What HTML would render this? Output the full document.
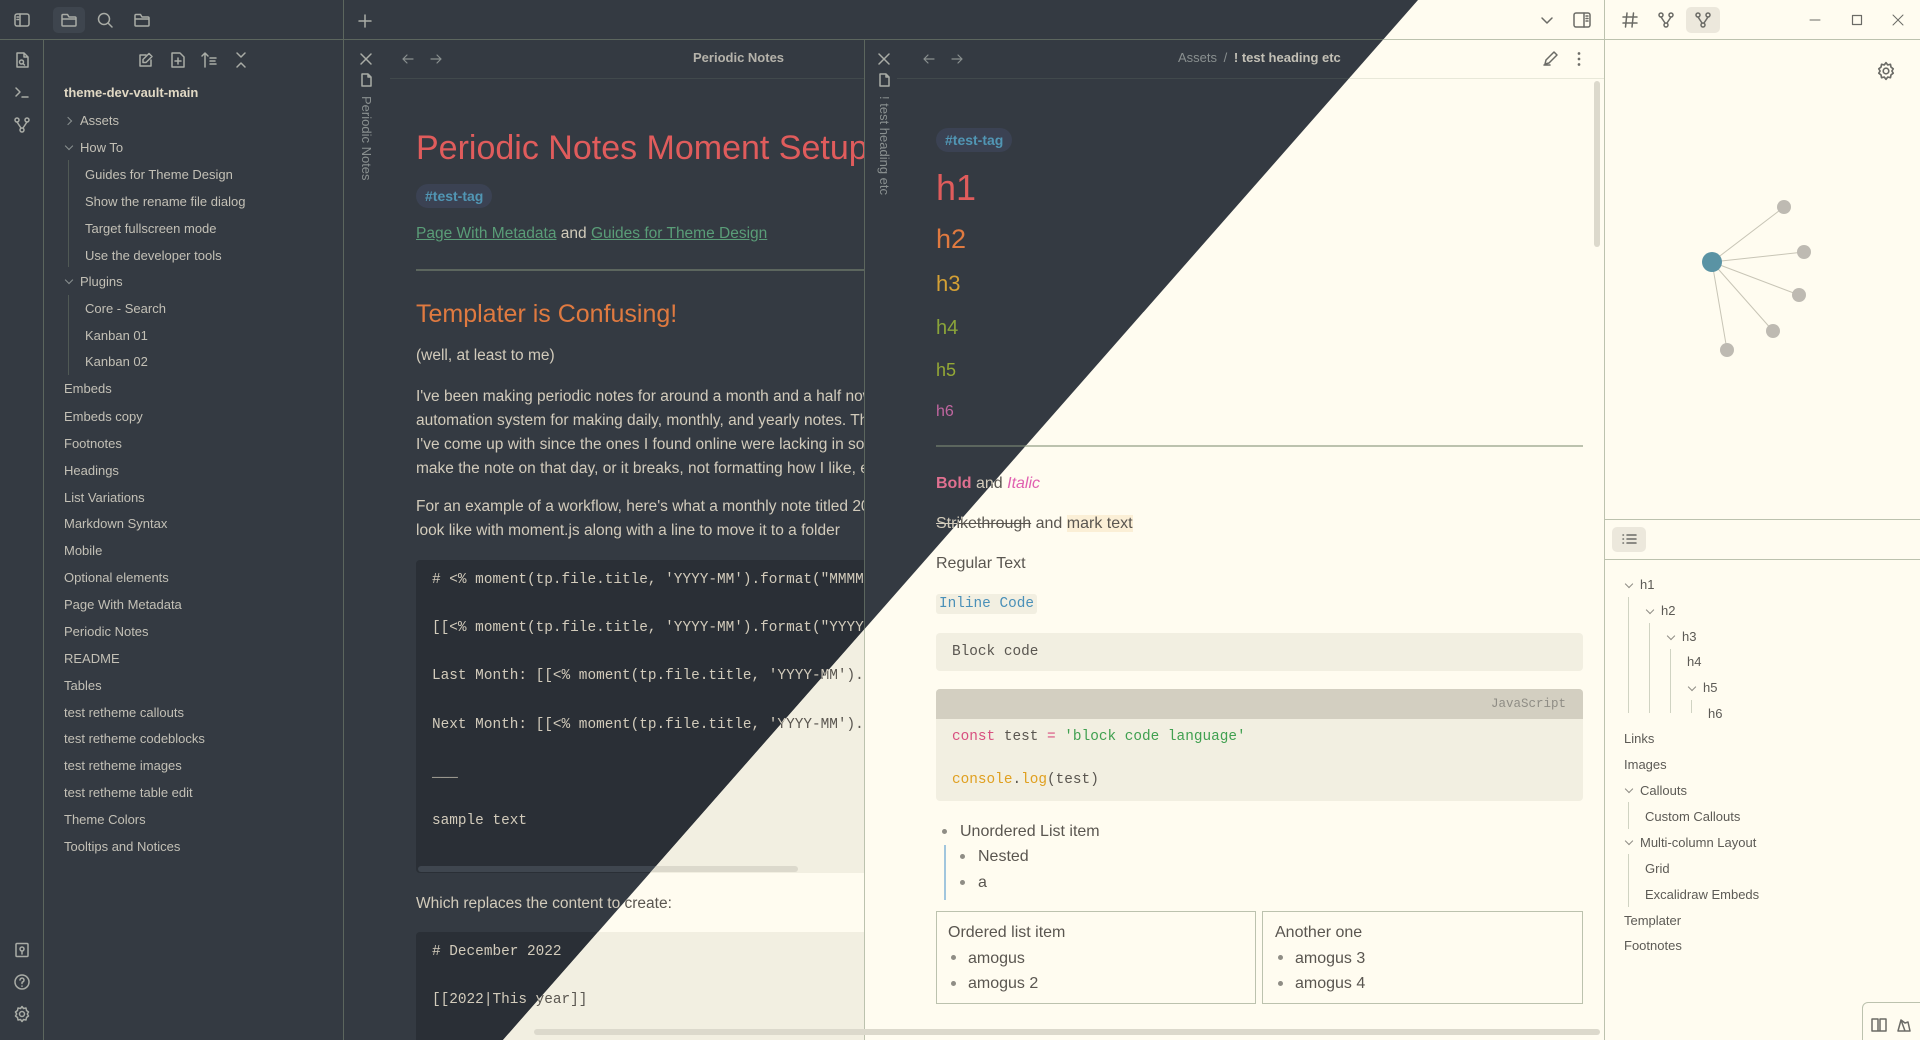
<!DOCTYPE html>
<html><head><meta charset="utf-8">
<style>
*{box-sizing:border-box;margin:0;padding:0}
html,body{width:1920px;height:1040px;overflow:hidden;font-family:"Liberation Sans",sans-serif}
.app{position:absolute;left:0;top:0;width:1920px;height:1040px;overflow:hidden;background:var(--bg);color:var(--tx)}
.dark{--bg:#343a42;--code:#2a2f36;--tx:#d2cbbb;--side:#c3c0b6;--mut:#8a9090;--bd:#5c665e;--ic:#a9aca6;--act:#3e454e;--tagbg:#3b4253;--tag:#5196b4;--link:#5a9d78;--sb:#3f464f;--jsh:#2a2f36;--hr:#5c665e}
.light{--bg:#fffcf0;--code:#f2efe1;--tx:#5a5650;--side:#5c5a55;--mut:#8f8d85;--bd:#bcc2ae;--ic:#6b6b66;--act:#ece8dc;--tagbg:#ecebe0;--tag:#4e8fa8;--link:#4f9a70;--sb:#dcd9cc;--jsh:#d3cfc1;--hr:#bcc2ae;clip-path:polygon(1418px 0,1920px 0,1920px 1040px,503px 1040px)}
.a{position:absolute;white-space:nowrap}
.vl{position:absolute;width:1px;background:var(--bd)}
.hl{position:absolute;height:1px;background:var(--bd)}
svg{position:absolute;fill:none;stroke:var(--ic);stroke-width:1.5;stroke-linecap:round;stroke-linejoin:round}
.si{position:absolute;font-size:13px;line-height:20px;color:var(--side);white-space:nowrap}
.p{position:absolute;font-size:16px;line-height:24px;white-space:nowrap}
.pp{font-size:15.5px}
.mono{font-family:"Liberation Mono",monospace}
.tag{position:absolute;background:var(--tagbg);color:var(--tag);border-radius:12px;font-size:14px;line-height:24px;padding:0 9px;font-weight:bold}
.lk{color:var(--link);text-decoration:underline}
.ol{position:absolute;font-size:13px;line-height:20px;color:var(--side);white-space:nowrap}
.chev{position:absolute;width:6px;height:6px;border-right:1.4px solid var(--mut);border-bottom:1.4px solid var(--mut);transform:rotate(45deg)}
.chr{transform:rotate(-45deg)}
.gl{position:absolute;width:1px;background:var(--bd);opacity:.7}
</style></head><body>

<!-- ================= DARK ================= -->
<div class="app dark">
 <div class="hl" style="left:0;top:39px;width:1920px"></div>
 <div class="vl" style="left:43px;top:39px;height:1001px"></div>
 <div class="vl" style="left:343px;top:0;height:1040px"></div>
 <div class="vl" style="left:864px;top:39px;height:1001px"></div>
 <div class="vl" style="left:1604px;top:0;height:1040px"></div>
 <svg style="left:13px;top:11px" width="18" height="18" viewBox="0 0 18 18"><rect x="2" y="3" width="14" height="12" rx="2"/><path d="M7 3v12M4 6h1.5M4 8.5h1.5"/></svg>
 <div style="position:absolute;left:53px;top:7px;width:32px;height:26px;border-radius:5px;background:var(--act)"></div>
 <svg style="left:60px;top:11px" width="18" height="18" viewBox="0 0 18 18"><path d="M2 5v9a1 1 0 0 0 1 1h12a1 1 0 0 0 1-1V7a1 1 0 0 0-1-1H9L7.5 3.5H3a1 1 0 0 0-1 1zM2 8h14"/></svg>
 <svg style="left:96px;top:11px" width="18" height="18" viewBox="0 0 18 18"><circle cx="8" cy="8" r="5.5"/><path d="M12 12l4 4"/></svg>
 <svg style="left:133px;top:11px" width="18" height="18" viewBox="0 0 18 18"><path d="M2 5v9a1 1 0 0 0 1 1h12a1 1 0 0 0 1-1V7a1 1 0 0 0-1-1H9L7.5 3.5H3a1 1 0 0 0-1 1zM2 8h14"/></svg>
 <svg style="left:356px;top:12px" width="18" height="18" viewBox="0 0 18 18"><path d="M9 3v12M3 9h12"/></svg>
 <svg style="left:1539px;top:12px" width="16" height="16" viewBox="0 0 16 16"><path d="M3 6l5 5 5-5"/></svg>
 <svg style="left:1572px;top:10px" width="20" height="20" viewBox="0 0 20 20"><rect x="2" y="3" width="16" height="14" rx="2"/><path d="M12 3v14M14 6h2M14 8.5h2M14 11h2"/></svg>
 <svg style="left:1621px;top:11px" width="18" height="18" viewBox="0 0 18 18"><path d="M6 2l-1.5 14M12.5 2L11 16M2 6h14M2 12h14"/></svg>
 <svg style="left:1657px;top:11px" width="18" height="18" viewBox="0 0 18 18"><circle cx="4" cy="4" r="2"/><circle cx="14" cy="4" r="2"/><circle cx="9" cy="14" r="2"/><path d="M4 6l4 6M14 6l-4 6"/></svg>
 <div style="position:absolute;left:1686px;top:7px;width:34px;height:26px;border-radius:5px;background:var(--act)"></div>
 <svg style="left:1694px;top:11px" width="18" height="18" viewBox="0 0 18 18"><circle cx="4" cy="4" r="2"/><circle cx="14" cy="4" r="2"/><circle cx="9" cy="14" r="2"/><path d="M4 6l4 6M14 6l-4 6"/></svg>
 <svg style="left:1808px;top:13px;stroke-width:1" width="14" height="14" viewBox="0 0 14 14"><path d="M2 7h10"/></svg>
 <svg style="left:1850px;top:13px;stroke-width:1.2" width="14" height="14" viewBox="0 0 14 14"><rect x="2.5" y="2.5" width="9" height="9"/></svg>
 <svg style="left:1891px;top:13px;stroke-width:1" width="14" height="14" viewBox="0 0 14 14"><path d="M2 2l10 10M12 2L2 12"/></svg>

 <svg style="left:13px;top:51px" width="18" height="18" viewBox="0 0 18 18"><path d="M4 2h7l4 4v10H4zM11 2v4h4"/><circle cx="8.5" cy="11" r="2"/><path d="M10 12.5l1.5 1.5"/></svg>
 <svg style="left:13px;top:83px" width="18" height="18" viewBox="0 0 18 18"><path d="M3 5l4 4-4 4M9 14h6"/></svg>
 <svg style="left:13px;top:116px" width="18" height="18" viewBox="0 0 18 18"><circle cx="4" cy="4" r="2"/><circle cx="14" cy="4" r="2"/><circle cx="9" cy="14" r="2"/><path d="M4 6l4 6M14 6l-4 6"/></svg>
 <svg style="left:13px;top:941px" width="18" height="18" viewBox="0 0 18 18"><rect x="3" y="2.5" width="12" height="13" rx="1"/><circle cx="9" cy="8" r="2"/><path d="M9 10v3"/></svg>
 <svg style="left:13px;top:973px" width="18" height="18" viewBox="0 0 18 18"><circle cx="9" cy="9" r="7"/><path d="M7 7a2 2 0 1 1 2.5 2c-.5.2-.5.7-.5 1.5M9 13v.2"/></svg>
 <svg style="left:13px;top:1005px" width="18" height="18" viewBox="0 0 18 18"><circle cx="9" cy="9" r="2.5"/><path d="M9 1.5l1.5 2 2.5-.5.5 2.5 2 1.5-1.2 2 1.2 2-2 1.5-.5 2.5-2.5-.5L9 16.5l-1.5-2-2.5.5-.5-2.5-2-1.5 1.2-2-1.2-2 2-1.5.5-2.5 2.5.5z"/></svg>

 <svg style="left:137px;top:51px" width="18" height="18" viewBox="0 0 18 18"><path d="M14 9v6H3V4h6M12 2.5l3 3-6 6H6v-3z"/></svg>
 <svg style="left:169px;top:51px" width="18" height="18" viewBox="0 0 18 18"><path d="M3 2h8l4 4v10H3zM9 7v6M6 10h6"/></svg>
 <svg style="left:200px;top:51px" width="18" height="18" viewBox="0 0 18 18"><path d="M5 16V2M2 5l3-3 3 3M10 7h6M10 10h5M10 13h6"/></svg>
 <svg style="left:232px;top:51px" width="18" height="18" viewBox="0 0 18 18"><path d="M5 2l4 4 4-4M5 16l4-4 4 4"/></svg>
 <div class="si" style="left:64px;top:83px;font-weight:bold;color:#e0d8c4">theme-dev-vault-main</div>
 <div class="chev chr" style="left:65px;top:118px"></div>
 <div class="si" style="left:80px;top:111px">Assets</div>
 <div class="chev" style="left:66px;top:143px"></div>
 <div class="si" style="left:80px;top:138px">How To</div>
 <div class="gl" style="left:68px;top:160px;height:107px"></div>
 <div class="si" style="left:85px;top:165px">Guides for Theme Design</div>
 <div class="si" style="left:85px;top:192px">Show the rename file dialog</div>
 <div class="si" style="left:85px;top:219px">Target fullscreen mode</div>
 <div class="si" style="left:85px;top:246px">Use the developer tools</div>
 <div class="chev" style="left:66px;top:277px"></div>
 <div class="si" style="left:80px;top:272px">Plugins</div>
 <div class="gl" style="left:68px;top:295px;height:80px"></div>
 <div class="si" style="left:85px;top:299px">Core - Search</div>
 <div class="si" style="left:85px;top:326px">Kanban 01</div>
 <div class="si" style="left:85px;top:352px">Kanban 02</div>
 <div class="si" style="left:64px;top:379px">Embeds</div>
 <div class="si" style="left:64px;top:407px">Embeds copy</div>
 <div class="si" style="left:64px;top:434px">Footnotes</div>
 <div class="si" style="left:64px;top:461px">Headings</div>
 <div class="si" style="left:64px;top:488px">List Variations</div>
 <div class="si" style="left:64px;top:514px">Markdown Syntax</div>
 <div class="si" style="left:64px;top:541px">Mobile</div>
 <div class="si" style="left:64px;top:568px">Optional elements</div>
 <div class="si" style="left:64px;top:595px">Page With Metadata</div>
 <div class="si" style="left:64px;top:622px">Periodic Notes</div>
 <div class="si" style="left:64px;top:649px">README</div>
 <div class="si" style="left:64px;top:676px">Tables</div>
 <div class="si" style="left:64px;top:703px">test retheme callouts</div>
 <div class="si" style="left:64px;top:729px">test retheme codeblocks</div>
 <div class="si" style="left:64px;top:756px">test retheme images</div>
 <div class="si" style="left:64px;top:783px">test retheme table edit</div>
 <div class="si" style="left:64px;top:810px">Theme Colors</div>
 <div class="si" style="left:64px;top:837px">Tooltips and Notices</div>

 <div style="position:absolute;left:344px;top:40px;width:520px;height:1000px;overflow:hidden">
  <svg style="left:14px;top:11px" width="16" height="16" viewBox="0 0 16 16"><path d="M3 3l10 10M13 3L3 13"/></svg>
  <svg style="left:14px;top:32px" width="16" height="16" viewBox="0 0 16 16"><path d="M4 2h6l3 3v9H4zM10 2v3h3"/></svg>
  <div class="a" style="left:15px;top:56px;writing-mode:vertical-rl;font-size:13px;color:var(--mut)">Periodic Notes</div>
  <svg style="left:56px;top:11px;stroke:var(--mut);stroke-width:1.2" width="16" height="16" viewBox="0 0 16 16"><path d="M13 8H3M7 4L3 8l4 4"/></svg>
  <svg style="left:84px;top:11px;stroke:var(--mut);stroke-width:1.2" width="16" height="16" viewBox="0 0 16 16"><path d="M3 8h10M9 4l4 4-4 4"/></svg>
  <div class="a" style="left:349px;top:10px;font-size:13px;color:var(--side);font-weight:bold;opacity:.9">Periodic Notes</div>
  <div class="hl" style="left:46px;top:38px;width:480px;opacity:.35"></div>
  <div class="a" style="left:72px;top:86px;font-size:34px;line-height:44px;color:#e05c5c">Periodic Notes Moment Setup</div>
  <div class="tag" style="left:72px;top:144px">#test-tag</div>
  <div class="p pp" style="left:72px;top:182px"><span class="lk">Page With Metadata</span> and <span class="lk">Guides for Theme Design</span></div>
  <div style="position:absolute;left:72px;top:229px;width:460px;height:2px;background:var(--hr)"></div>
  <div class="a" style="left:72px;top:257px;font-size:25px;line-height:34px;color:#e07a40">Templater is Confusing!</div>
  <div class="p pp" style="left:72px;top:304px">(well, at least to me)</div>
  <div class="p pp" style="left:72px;top:345px">I've been making periodic notes for around a month and a half now, and have made an<br>automation system for making daily, monthly, and yearly notes. This is just a system<br>I've come up with since the ones I found online were lacking in some way, like having to<br>make the note on that day, or it breaks, not formatting how I like, etc.</div>
  <div class="p pp" style="left:72px;top:455px">For an example of a workflow, here's what a monthly note titled 2022-12 would<br>look like with moment.js along with a line to move it to a folder</div>
  <div style="position:absolute;left:72px;top:520px;width:480px;height:313px;background:var(--code);border-radius:4px"></div>
  <div class="p mono" style="left:88px;top:516px;font-size:14.4px;line-height:48.2px">#&nbsp;&lt;%&nbsp;moment(tp.file.title,&nbsp;'YYYY-MM').format("MMMM&nbsp;YYYY")&nbsp;%&gt;<br>[[&lt;%&nbsp;moment(tp.file.title,&nbsp;'YYYY-MM').format("YYYY")&nbsp;%&gt;]]<br>Last&nbsp;Month:&nbsp;[[&lt;%&nbsp;moment(tp.file.title,&nbsp;'YYYY-MM').subtract(1)]]<br>Next&nbsp;Month:&nbsp;[[&lt;%&nbsp;moment(tp.file.title,&nbsp;'YYYY-MM').add(1)]]<br>___<br>sample&nbsp;text</div>
  <div style="position:absolute;left:74px;top:826px;width:380px;height:6px;border-radius:3px;background:var(--sb)"></div>
  <div class="p pp" style="left:72px;top:852px">Which replaces the content to create:</div>
  <div style="position:absolute;left:72px;top:892px;width:480px;height:120px;background:var(--code);border-radius:4px"></div>
  <div class="p mono" style="left:88px;top:888px;font-size:14.4px;line-height:48.2px">#&nbsp;December&nbsp;2022<br>[[2022|This&nbsp;year]]</div>
 </div>

 <div style="position:absolute;left:865px;top:40px;width:739px;height:1000px;overflow:hidden">
  <svg style="left:11px;top:11px" width="16" height="16" viewBox="0 0 16 16"><path d="M3 3l10 10M13 3L3 13"/></svg>
  <svg style="left:11px;top:32px" width="16" height="16" viewBox="0 0 16 16"><path d="M4 2h6l3 3v9H4zM10 2v3h3"/></svg>
  <div class="a" style="left:12px;top:56px;writing-mode:vertical-rl;font-size:13px;color:var(--mut)">! test heading etc</div>
  <svg style="left:56px;top:11px;stroke:var(--mut);stroke-width:1.2" width="16" height="16" viewBox="0 0 16 16"><path d="M13 8H3M7 4L3 8l4 4"/></svg>
  <svg style="left:84px;top:11px;stroke:var(--mut);stroke-width:1.2" width="16" height="16" viewBox="0 0 16 16"><path d="M3 8h10M9 4l4 4-4 4"/></svg>
  <div class="a" style="left:313px;top:10px;font-size:13px;color:var(--mut)">Assets <span style="margin:0 3px">/</span> <b style="color:var(--side)">! test heading etc</b></div>
  <svg style="left:676px;top:10px" width="18" height="18" viewBox="0 0 18 18"><path d="M3 15h6M4 14l1-4 8-8 3 3-8 8z"/></svg>
  <svg style="left:705px;top:10px" width="18" height="18" viewBox="0 0 18 18"><circle cx="9" cy="3.5" r=".6"/><circle cx="9" cy="9" r=".6"/><circle cx="9" cy="14.5" r=".6"/></svg>
  <div class="hl" style="left:32px;top:38px;width:710px;opacity:.35"></div>
  <div style="position:absolute;left:729px;top:41px;width:6px;height:166px;border-radius:3px;background:var(--sb)"></div>
  <div class="tag" style="left:71px;top:88px">#test-tag</div>
  <div class="a" style="left:71px;top:126px;font-size:36px;line-height:44px;color:#e05c5c">h1</div>
  <div class="a" style="left:71px;top:182px;font-size:27px;line-height:34px;color:#e07a40">h2</div>
  <div class="a" style="left:71px;top:230px;font-size:22px;line-height:28px;color:#d4a035">h3</div>
  <div class="a" style="left:71px;top:275px;font-size:20px;line-height:26px;color:#8aa43a">h4</div>
  <div class="a" style="left:71px;top:318px;font-size:18px;line-height:24px;color:#94a836">h5</div>
  <div class="a" style="left:71px;top:361px;font-size:16px;line-height:22px;color:#c066a0">h6</div>
  <div style="position:absolute;left:71px;top:405px;width:647px;height:2px;background:var(--hr)"></div>
  <div class="p" style="left:71px;top:432px"><b style="color:#e07090">Bold</b> and <i style="color:#e060b0">Italic</i></div>
  <div class="p" style="left:71px;top:472px"><s>Strikethrough</s> and <span style="background:rgba(245,220,160,.35)">mark text</span></div>
  <div class="p" style="left:71px;top:512px">Regular Text</div>
  <div class="p mono" style="left:71px;top:554px;font-size:14.4px;line-height:20px;padding:0 3px;background:var(--code);border-radius:3px;color:#4a90b8">Inline Code</div>
  <div style="position:absolute;left:71px;top:593px;width:647px;height:38px;background:var(--code);border-radius:4px"></div>
  <div class="p mono" style="left:87px;top:600px;font-size:14.4px">Block code</div>
  <div style="position:absolute;left:71px;top:649px;width:647px;height:112px;background:var(--code);border-radius:4px;overflow:hidden"><div style="height:30px;background:var(--jsh)"></div></div>
  <div class="a mono" style="left:626px;top:655px;font-size:12.5px;line-height:18px;color:var(--mut)">JavaScript</div>
  <div class="p mono" style="left:87px;top:676px;font-size:14.4px;line-height:43px"><span style="color:#d85080">const</span> test <span style="color:#d85080">=</span> <span style="color:#40a050">'block code language'</span><br><span style="color:#e0a020">console</span>.<span style="color:#e0a020">log</span>(test)</div>
  <div style="position:absolute;left:77px;top:789px;width:5px;height:5px;border-radius:50%;background:var(--mut)"></div>
  <div class="p" style="left:95px;top:780px">Unordered List item</div>
  <div style="position:absolute;left:79px;top:805px;width:2px;height:55px;background:#8ab8d8;opacity:.8"></div>
  <div style="position:absolute;left:95px;top:814px;width:5px;height:5px;border-radius:50%;background:var(--mut)"></div>
  <div class="p" style="left:113px;top:805px">Nested</div>
  <div style="position:absolute;left:95px;top:840px;width:5px;height:5px;border-radius:50%;background:var(--mut)"></div>
  <div class="p" style="left:113px;top:831px">a</div>
  <div style="position:absolute;left:71px;top:871px;width:320px;height:93px;border:1.5px solid var(--bd)"></div>
  <div style="position:absolute;left:397px;top:871px;width:321px;height:93px;border:1.5px solid var(--bd)"></div>
  <div class="p" style="left:83px;top:881px">Ordered list item</div>
  <div style="position:absolute;left:86px;top:915px;width:5px;height:5px;border-radius:50%;background:var(--mut)"></div>
  <div class="p" style="left:103px;top:907px">amogus</div>
  <div style="position:absolute;left:86px;top:941px;width:5px;height:5px;border-radius:50%;background:var(--mut)"></div>
  <div class="p" style="left:103px;top:932px">amogus 2</div>
  <div class="p" style="left:410px;top:881px">Another one</div>
  <div style="position:absolute;left:413px;top:915px;width:5px;height:5px;border-radius:50%;background:var(--mut)"></div>
  <div class="p" style="left:430px;top:907px">amogus 3</div>
  <div style="position:absolute;left:413px;top:941px;width:5px;height:5px;border-radius:50%;background:var(--mut)"></div>
  <div class="p" style="left:430px;top:932px">amogus 4</div>
 </div>
 <div style="position:absolute;left:534px;top:1029px;width:1066px;height:6px;border-radius:3px;background:var(--sb)"></div>

 <svg style="left:1876px;top:61px" width="20" height="20" viewBox="0 0 18 18"><circle cx="9" cy="9" r="2.5"/><path d="M9 1.5l1.5 2 2.5-.5.5 2.5 2 1.5-1.2 2 1.2 2-2 1.5-.5 2.5-2.5-.5L9 16.5l-1.5-2-2.5.5-.5-2.5-2-1.5 1.2-2-1.2-2 2-1.5.5-2.5 2.5.5z"/></svg>
 <svg style="left:1605px;top:40px;stroke:#c8c5b6;stroke-width:1" width="315" height="480" viewBox="1605 40 315 480">
  <path d="M1712 262L1784 207M1712 262L1804 252M1712 262L1799 295M1712 262L1773 331M1712 262L1727 350"/>
 </svg>
 <div style="position:absolute;left:1777px;top:200px;width:14px;height:14px;border-radius:50%;background:#bebab2"></div>
 <div style="position:absolute;left:1797px;top:245px;width:14px;height:14px;border-radius:50%;background:#bebab2"></div>
 <div style="position:absolute;left:1792px;top:288px;width:14px;height:14px;border-radius:50%;background:#bebab2"></div>
 <div style="position:absolute;left:1766px;top:324px;width:14px;height:14px;border-radius:50%;background:#bebab2"></div>
 <div style="position:absolute;left:1720px;top:343px;width:14px;height:14px;border-radius:50%;background:#bebab2"></div>
 <div style="position:absolute;left:1702px;top:252px;width:20px;height:20px;border-radius:50%;background:#5a93a4"></div>
 <div class="hl" style="left:1605px;top:519px;width:315px"></div>
 <div style="position:absolute;left:1612px;top:527px;width:34px;height:25px;border-radius:5px;background:var(--act)"></div>
 <svg style="left:1620px;top:530px" width="18" height="18" viewBox="0 0 18 18"><path d="M7 5h9M7 9h9M7 13h9M3 5h.5M3 9h.5M3 13h.5"/></svg>
 <div class="hl" style="left:1605px;top:559px;width:315px"></div>
 <div class="chev" style="left:1626px;top:581px"></div><div class="ol" style="left:1640px;top:575px">h1</div>
 <div class="gl" style="left:1628px;top:597px;height:116px"></div>
 <div class="chev" style="left:1647px;top:607px"></div><div class="ol" style="left:1661px;top:601px">h2</div>
 <div class="gl" style="left:1649px;top:623px;height:90px"></div>
 <div class="chev" style="left:1668px;top:633px"></div><div class="ol" style="left:1682px;top:627px">h3</div>
 <div class="gl" style="left:1670px;top:649px;height:64px"></div>
 <div class="ol" style="left:1687px;top:652px">h4</div>
 <div class="chev" style="left:1689px;top:684px"></div><div class="ol" style="left:1703px;top:678px">h5</div>
 <div class="gl" style="left:1691px;top:700px;height:13px"></div>
 <div class="ol" style="left:1708px;top:704px">h6</div>
 <div class="ol" style="left:1624px;top:729px">Links</div>
 <div class="ol" style="left:1624px;top:755px">Images</div>
 <div class="chev" style="left:1626px;top:786px"></div><div class="ol" style="left:1640px;top:781px">Callouts</div>
 <div class="gl" style="left:1628px;top:802px;height:27px"></div>
 <div class="ol" style="left:1645px;top:807px">Custom Callouts</div>
 <div class="chev" style="left:1626px;top:838px"></div><div class="ol" style="left:1640px;top:833px">Multi-column Layout</div>
 <div class="gl" style="left:1628px;top:854px;height:53px"></div>
 <div class="ol" style="left:1645px;top:859px">Grid</div>
 <div class="ol" style="left:1645px;top:885px">Excalidraw Embeds</div>
 <div class="ol" style="left:1624px;top:911px">Templater</div>
 <div class="ol" style="left:1624px;top:936px">Footnotes</div>
 <div style="position:absolute;left:1862px;top:1002px;width:70px;height:45px;border:1px solid var(--bd);border-radius:6px;background:var(--bg)"></div>
 <svg style="left:1870px;top:1016px" width="18" height="18" viewBox="0 0 18 18"><path d="M2 3h6v12H2zM10 3h6v12h-6zM8 15h2"/></svg>
 <svg style="left:1895px;top:1016px" width="18" height="18" viewBox="0 0 18 18"><path d="M3 15l3-11 4 3 3-1 2 9zM6 4l4 11"/></svg>
</div>

<!-- ================= LIGHT ================= -->
<div class="app light">
 <div class="hl" style="left:0;top:39px;width:1920px"></div>
 <div class="vl" style="left:43px;top:39px;height:1001px"></div>
 <div class="vl" style="left:343px;top:0;height:1040px"></div>
 <div class="vl" style="left:864px;top:39px;height:1001px"></div>
 <div class="vl" style="left:1604px;top:0;height:1040px"></div>
 <svg style="left:1539px;top:12px" width="16" height="16" viewBox="0 0 16 16"><path d="M3 6l5 5 5-5"/></svg>
 <svg style="left:1572px;top:10px" width="20" height="20" viewBox="0 0 20 20"><rect x="2" y="3" width="16" height="14" rx="2"/><path d="M12 3v14M14 6h2M14 8.5h2M14 11h2"/></svg>
 <svg style="left:1621px;top:11px" width="18" height="18" viewBox="0 0 18 18"><path d="M6 2l-1.5 14M12.5 2L11 16M2 6h14M2 12h14"/></svg>
 <svg style="left:1657px;top:11px" width="18" height="18" viewBox="0 0 18 18"><circle cx="4" cy="4" r="2"/><circle cx="14" cy="4" r="2"/><circle cx="9" cy="14" r="2"/><path d="M4 6l4 6M14 6l-4 6"/></svg>
 <div style="position:absolute;left:1686px;top:7px;width:34px;height:26px;border-radius:5px;background:var(--act)"></div>
 <svg style="left:1694px;top:11px" width="18" height="18" viewBox="0 0 18 18"><circle cx="4" cy="4" r="2"/><circle cx="14" cy="4" r="2"/><circle cx="9" cy="14" r="2"/><path d="M4 6l4 6M14 6l-4 6"/></svg>
 <svg style="left:1808px;top:13px;stroke-width:1" width="14" height="14" viewBox="0 0 14 14"><path d="M2 7h10"/></svg>
 <svg style="left:1850px;top:13px;stroke-width:1.2" width="14" height="14" viewBox="0 0 14 14"><rect x="2.5" y="2.5" width="9" height="9"/></svg>
 <svg style="left:1891px;top:13px;stroke-width:1" width="14" height="14" viewBox="0 0 14 14"><path d="M2 2l10 10M12 2L2 12"/></svg>

 <div style="position:absolute;left:344px;top:40px;width:520px;height:1000px;overflow:hidden">
  <div class="p pp" style="left:72px;top:345px">I've been making periodic notes for around a month and a half now, and have made an<br>automation system for making daily, monthly, and yearly notes. This is just a system<br>I've come up with since the ones I found online were lacking in some way, like having to<br>make the note on that day, or it breaks, not formatting how I like, etc.</div>
  <div class="p pp" style="left:72px;top:455px">For an example of a workflow, here's what a monthly note titled 2022-12 would<br>look like with moment.js along with a line to move it to a folder</div>
  <div style="position:absolute;left:72px;top:520px;width:480px;height:313px;background:var(--code);border-radius:4px"></div>
  <div class="p mono" style="left:88px;top:516px;font-size:14.4px;line-height:48.2px">#&nbsp;&lt;%&nbsp;moment(tp.file.title,&nbsp;'YYYY-MM').format("MMMM&nbsp;YYYY")&nbsp;%&gt;<br>[[&lt;%&nbsp;moment(tp.file.title,&nbsp;'YYYY-MM').format("YYYY")&nbsp;%&gt;]]<br>Last&nbsp;Month:&nbsp;[[&lt;%&nbsp;moment(tp.file.title,&nbsp;'YYYY-MM').subtract(1)]]<br>Next&nbsp;Month:&nbsp;[[&lt;%&nbsp;moment(tp.file.title,&nbsp;'YYYY-MM').add(1)]]<br>___<br>sample&nbsp;text</div>
  <div style="position:absolute;left:74px;top:826px;width:380px;height:6px;border-radius:3px;background:var(--sb)"></div>
  <div class="p pp" style="left:72px;top:852px">Which replaces the content to create:</div>
  <div style="position:absolute;left:72px;top:892px;width:480px;height:120px;background:var(--code);border-radius:4px"></div>
  <div class="p mono" style="left:88px;top:888px;font-size:14.4px;line-height:48.2px">#&nbsp;December&nbsp;2022<br>[[2022|This&nbsp;year]]</div>
 </div>

 <div style="position:absolute;left:865px;top:40px;width:739px;height:1000px;overflow:hidden">
  <div class="a" style="left:313px;top:10px;font-size:13px;color:var(--mut)">Assets <span style="margin:0 3px">/</span> <b style="color:var(--side)">! test heading etc</b></div>
  <svg style="left:676px;top:10px" width="18" height="18" viewBox="0 0 18 18"><path d="M3 15h6M4 14l1-4 8-8 3 3-8 8z"/></svg>
  <svg style="left:705px;top:10px" width="18" height="18" viewBox="0 0 18 18"><circle cx="9" cy="3.5" r=".6"/><circle cx="9" cy="9" r=".6"/><circle cx="9" cy="14.5" r=".6"/></svg>
  <div class="hl" style="left:32px;top:38px;width:710px;opacity:.35"></div>
  <div style="position:absolute;left:729px;top:41px;width:6px;height:166px;border-radius:3px;background:var(--sb)"></div>
  <div style="position:absolute;left:71px;top:405px;width:647px;height:2px;background:var(--hr)"></div>
  <div class="p" style="left:71px;top:432px"><b style="color:#e07090">Bold</b> and <i style="color:#e060b0">Italic</i></div>
  <div class="p" style="left:71px;top:472px"><s>Strikethrough</s> and <span style="background:#fbefd6">mark text</span></div>
  <div class="p" style="left:71px;top:512px">Regular Text</div>
  <div class="p mono" style="left:71px;top:554px;font-size:14.4px;line-height:20px;padding:0 3px;background:var(--code);border-radius:3px;color:#4a90b8">Inline Code</div>
  <div style="position:absolute;left:71px;top:593px;width:647px;height:38px;background:var(--code);border-radius:4px"></div>
  <div class="p mono" style="left:87px;top:600px;font-size:14.4px">Block code</div>
  <div style="position:absolute;left:71px;top:649px;width:647px;height:112px;background:var(--code);border-radius:4px;overflow:hidden"><div style="height:30px;background:var(--jsh)"></div></div>
  <div class="a mono" style="left:626px;top:655px;font-size:12.5px;line-height:18px;color:var(--mut)">JavaScript</div>
  <div class="p mono" style="left:87px;top:676px;font-size:14.4px;line-height:43px"><span style="color:#d85080">const</span> test <span style="color:#d85080">=</span> <span style="color:#40a050">'block code language'</span><br><span style="color:#e0a020">console</span>.<span style="color:#e0a020">log</span>(test)</div>
  <div style="position:absolute;left:77px;top:789px;width:5px;height:5px;border-radius:50%;background:var(--mut)"></div>
  <div class="p" style="left:95px;top:780px">Unordered List item</div>
  <div style="position:absolute;left:79px;top:805px;width:2px;height:55px;background:#8ab8d8;opacity:.8"></div>
  <div style="position:absolute;left:95px;top:814px;width:5px;height:5px;border-radius:50%;background:var(--mut)"></div>
  <div class="p" style="left:113px;top:805px">Nested</div>
  <div style="position:absolute;left:95px;top:840px;width:5px;height:5px;border-radius:50%;background:var(--mut)"></div>
  <div class="p" style="left:113px;top:831px">a</div>
  <div style="position:absolute;left:71px;top:871px;width:320px;height:93px;border:1.5px solid var(--bd)"></div>
  <div style="position:absolute;left:397px;top:871px;width:321px;height:93px;border:1.5px solid var(--bd)"></div>
  <div class="p" style="left:83px;top:881px">Ordered list item</div>
  <div style="position:absolute;left:86px;top:915px;width:5px;height:5px;border-radius:50%;background:var(--mut)"></div>
  <div class="p" style="left:103px;top:907px">amogus</div>
  <div style="position:absolute;left:86px;top:941px;width:5px;height:5px;border-radius:50%;background:var(--mut)"></div>
  <div class="p" style="left:103px;top:932px">amogus 2</div>
  <div class="p" style="left:410px;top:881px">Another one</div>
  <div style="position:absolute;left:413px;top:915px;width:5px;height:5px;border-radius:50%;background:var(--mut)"></div>
  <div class="p" style="left:430px;top:907px">amogus 3</div>
  <div style="position:absolute;left:413px;top:941px;width:5px;height:5px;border-radius:50%;background:var(--mut)"></div>
  <div class="p" style="left:430px;top:932px">amogus 4</div>
 </div>
 <div style="position:absolute;left:534px;top:1029px;width:1066px;height:6px;border-radius:3px;background:var(--sb)"></div>

 <svg style="left:1876px;top:61px" width="20" height="20" viewBox="0 0 18 18"><circle cx="9" cy="9" r="2.5"/><path d="M9 1.5l1.5 2 2.5-.5.5 2.5 2 1.5-1.2 2 1.2 2-2 1.5-.5 2.5-2.5-.5L9 16.5l-1.5-2-2.5.5-.5-2.5-2-1.5 1.2-2-1.2-2 2-1.5.5-2.5 2.5.5z"/></svg>
 <svg style="left:1605px;top:40px;stroke:#c8c5b6;stroke-width:1" width="315" height="480" viewBox="1605 40 315 480">
  <path d="M1712 262L1784 207M1712 262L1804 252M1712 262L1799 295M1712 262L1773 331M1712 262L1727 350"/>
 </svg>
 <div style="position:absolute;left:1777px;top:200px;width:14px;height:14px;border-radius:50%;background:#bebab2"></div>
 <div style="position:absolute;left:1797px;top:245px;width:14px;height:14px;border-radius:50%;background:#bebab2"></div>
 <div style="position:absolute;left:1792px;top:288px;width:14px;height:14px;border-radius:50%;background:#bebab2"></div>
 <div style="position:absolute;left:1766px;top:324px;width:14px;height:14px;border-radius:50%;background:#bebab2"></div>
 <div style="position:absolute;left:1720px;top:343px;width:14px;height:14px;border-radius:50%;background:#bebab2"></div>
 <div style="position:absolute;left:1702px;top:252px;width:20px;height:20px;border-radius:50%;background:#5a93a4"></div>
 <div class="hl" style="left:1605px;top:519px;width:315px"></div>
 <div style="position:absolute;left:1612px;top:527px;width:34px;height:25px;border-radius:5px;background:var(--act)"></div>
 <svg style="left:1620px;top:530px" width="18" height="18" viewBox="0 0 18 18"><path d="M7 5h9M7 9h9M7 13h9M3 5h.5M3 9h.5M3 13h.5"/></svg>
 <div class="hl" style="left:1605px;top:559px;width:315px"></div>
 <div class="chev" style="left:1626px;top:581px"></div><div class="ol" style="left:1640px;top:575px">h1</div>
 <div class="gl" style="left:1628px;top:597px;height:116px"></div>
 <div class="chev" style="left:1647px;top:607px"></div><div class="ol" style="left:1661px;top:601px">h2</div>
 <div class="gl" style="left:1649px;top:623px;height:90px"></div>
 <div class="chev" style="left:1668px;top:633px"></div><div class="ol" style="left:1682px;top:627px">h3</div>
 <div class="gl" style="left:1670px;top:649px;height:64px"></div>
 <div class="ol" style="left:1687px;top:652px">h4</div>
 <div class="chev" style="left:1689px;top:684px"></div><div class="ol" style="left:1703px;top:678px">h5</div>
 <div class="gl" style="left:1691px;top:700px;height:13px"></div>
 <div class="ol" style="left:1708px;top:704px">h6</div>
 <div class="ol" style="left:1624px;top:729px">Links</div>
 <div class="ol" style="left:1624px;top:755px">Images</div>
 <div class="chev" style="left:1626px;top:786px"></div><div class="ol" style="left:1640px;top:781px">Callouts</div>
 <div class="gl" style="left:1628px;top:802px;height:27px"></div>
 <div class="ol" style="left:1645px;top:807px">Custom Callouts</div>
 <div class="chev" style="left:1626px;top:838px"></div><div class="ol" style="left:1640px;top:833px">Multi-column Layout</div>
 <div class="gl" style="left:1628px;top:854px;height:53px"></div>
 <div class="ol" style="left:1645px;top:859px">Grid</div>
 <div class="ol" style="left:1645px;top:885px">Excalidraw Embeds</div>
 <div class="ol" style="left:1624px;top:911px">Templater</div>
 <div class="ol" style="left:1624px;top:936px">Footnotes</div>
 <div style="position:absolute;left:1862px;top:1002px;width:70px;height:45px;border:1px solid var(--bd);border-radius:6px;background:var(--bg)"></div>
 <svg style="left:1870px;top:1016px" width="18" height="18" viewBox="0 0 18 18"><path d="M2 3h6v12H2zM10 3h6v12h-6zM8 15h2"/></svg>
 <svg style="left:1895px;top:1016px" width="18" height="18" viewBox="0 0 18 18"><path d="M3 15l3-11 4 3 3-1 2 9zM6 4l4 11"/></svg>
</div>
</body></html>
